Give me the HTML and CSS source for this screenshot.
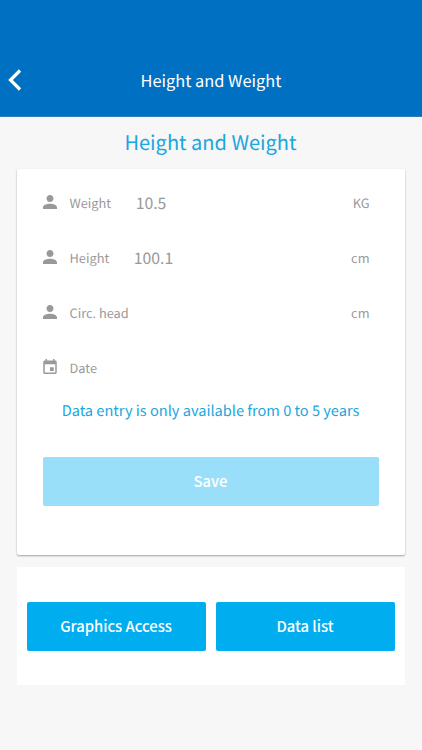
FILE: index.html
```html
<!DOCTYPE html>
<html lang="en">
<head>
<meta charset="utf-8">
<meta name="viewport" content="width=device-width, initial-scale=1">
<title>Height and Weight</title>
<link rel="stylesheet" href="styles.css">
</head>
<body>
<svg class="sprite" aria-hidden="true">
  <symbol id="person" viewBox="4 4 16 16"><path d="M12 12c2.200 0 4-1.800 4-4s-1.800-4-4-4-4 1.800-4 4 1.800 4 4 4zm0 2c-2.700 0-8 1.300-8 4v2h16v-2c0-2.700-5.300-4-8-4z"/></symbol>
  <symbol id="event" viewBox="3 1 18 20"><path d="M17 12h-5v5h5v-5zM16 1v2H8V1H6v2H5c-1.100 0-2 .9-2 2v14c0 1.100.9 2 2 2h14c1.100 0 2-.9 2-2V5c0-1.100-.9-2-2-2h-1V1h-2zm3 18H5V8h14v11z"/></symbol>
</svg>
<header class="topbar">
  <a class="back" href="#" aria-label="Back"><svg viewBox="0 0 14 22"><path d="M12 1.500 2.500 11l9.500 9.500"/></svg></a>
  <span class="topbar-title">Height and Weight</span>
</header>
<main class="content">
  <h1 class="heading">Height and Weight</h1>
  <form class="card">
    <div class="row">
      <svg class="icon"><use href="#person"/></svg>
      <span class="label">Weight</span><span class="value">10.5</span><span class="unit">KG</span>
    </div>
    <div class="row">
      <svg class="icon"><use href="#person"/></svg>
      <span class="label">Height</span><span class="value">100.1</span><span class="unit">cm</span>
    </div>
    <div class="row">
      <svg class="icon"><use href="#person"/></svg>
      <span class="label">Circ. head</span><span class="unit">cm</span>
    </div>
    <div class="row row-date">
      <svg class="icon icon-date"><use href="#event"/></svg>
      <span class="label">Date</span>
    </div>
    <p class="note">Data entry is only available from 0 to 5 years</p>
    <button class="btn save" type="button" disabled>Save</button>
  </form>
  <section class="actions">
    <button class="btn" type="button">Graphics Access</button>
    <button class="btn" type="button">Data list</button>
  </section>
</main>
</body>
</html>
```
FILE: styles.css
```css
* { box-sizing: border-box; }
body {
  margin: 0;
  min-height: 750px;
  background: #f7f7f7;
  color: #999;
  font-family: "Noto Sans CJK SC", "Open Sans", sans-serif;
  text-rendering: geometricPrecision;
}
.sprite { display: none; }
.topbar {
  display: grid;
  grid-template-columns: 40px 1fr 40px;
  align-items: center;
  height: 117px;
  padding-top: 44px;
  background: #0070c2;
  border-bottom: 1px solid #2c7db9;
  color: #fff;
}
.back { display: flex; padding-left: 8px; }
.back svg { width: 14px; height: 22px; fill: none; stroke: #fff; stroke-width: 3.2; }
.topbar-title { font-size: 16.4px; line-height: 24px; text-align: center; }
.content { padding: 0 17px; }
.heading {
  margin: 0;
  padding: 9px 1px 0 0;
  height: 52px;
  color: #1ba6dc;
  font-size: 20px;
  font-weight: 400;
  line-height: 32px;
  text-align: center;
}
.card {
  display: flex;
  flex-direction: column;
  height: 386px;
  padding: 7px 26px 0;
  background: #fff;
  border-radius: 2px;
  box-shadow: 0 1px 2px rgba(0, 0, 0, .35);
}
.row { display: flex; align-items: center; height: 55px; }
.row-date { height: 54px; }
.icon { width: 14px; height: 14px; margin: -4px 12.5px 0 0; fill: #999; }
.icon-date { height: 15px; }
.label { margin-top: -1px; font-size: 12.8px; line-height: 20px; }
.value { margin: -1px 0 0 24.500px; font-size: 15.8px; line-height: 24px; }
.unit { margin: -1px 0 0 auto; padding-right: 9.500px; font-size: 12.8px; line-height: 20px; }
.note {
  margin: 4px 0 0;
  padding-right: 1px;
  color: #1ba6dc;
  font-size: 14.6px;
  line-height: 24px;
  text-align: center;
}
.btn {
  height: 49px;
  padding: 0 1px 2px 0;
  border: 0;
  border-radius: 2px;
  background: #00aef0;
  color: #fff;
  font-family: inherit;
  font-size: 14.8px;
  font-weight: 500;
  line-height: 24px;
}
.save { margin-top: 34px; background: #99dff9; }
.actions {
  display: grid;
  grid-template-columns: 1fr 1fr;
  gap: 10px;
  height: 118px;
  margin-top: 12px;
  padding: 35px 10px 0;
  background: #fff;
}
```
